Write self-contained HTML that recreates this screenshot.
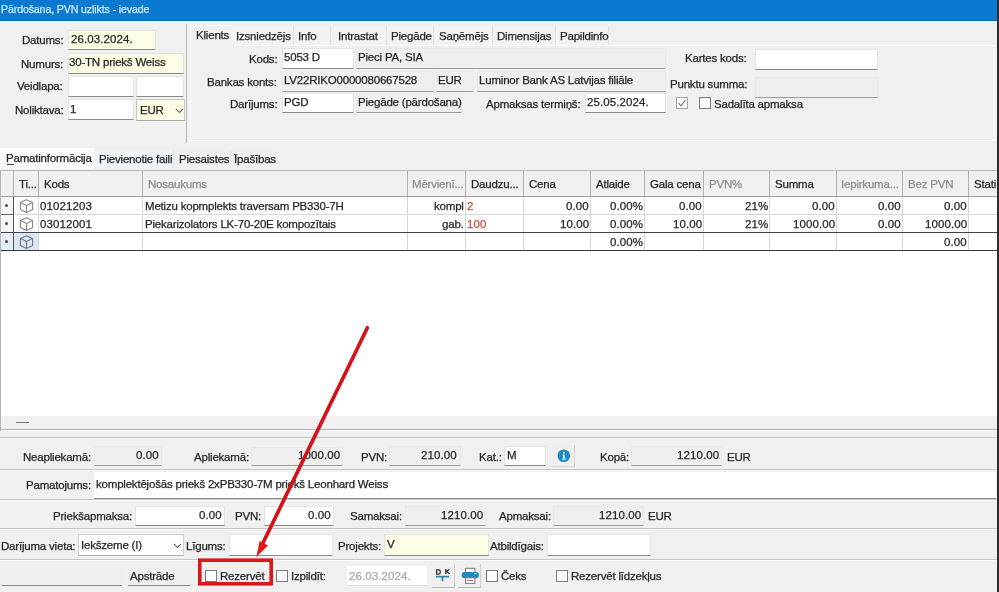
<!DOCTYPE html>
<html><head><meta charset="utf-8"><style>
html,body{margin:0;padding:0;}
body{-webkit-font-smoothing:antialiased;width:999px;height:592px;position:relative;overflow:hidden;background:#f0f0f0;font-family:"Liberation Sans",sans-serif;}
body>div{position:absolute;box-sizing:content-box;}
.t{position:absolute;white-space:pre;line-height:14px;will-change:transform;-webkit-text-stroke:0.25px currentColor;}
</style></head><body>
<div style="left:0px;top:0px;width:999px;height:21px;background:#0b79d0"></div>
<div style="left:0px;top:20px;width:999px;height:1px;background:#0a6ab8"></div>
<span class="t" style="left:0.5px;top:2.02px;color:#c8e9ff;font-size:10.6px;letter-spacing:-0.12px;">Pārdošana, PVN uzlikts - ievade</span>
<div style="left:0px;top:21px;width:999px;height:2px;background:#e2f3fb"></div>
<span class="t" style="right:936px;top:33.00px;color:#262626;font-size:11.5px;letter-spacing:-0.2px;">Datums:</span>
<div style="left:68px;top:30px;width:86px;height:18px;background:#fdfde6;border:1px solid #e4e4e4;border-bottom-color:#8a8a8a"></div>
<span class="t" style="left:71px;top:31.80px;color:#262626;font-size:11.5px;letter-spacing:0.1px;">26.03.2024.</span>
<span class="t" style="right:936px;top:56.50px;color:#262626;font-size:11.5px;letter-spacing:-0.2px;">Numurs:</span>
<div style="left:68px;top:53px;width:114px;height:19px;background:#fdfde6;border:1px solid #e4e4e4;border-bottom-color:#8a8a8a"></div>
<span class="t" style="left:69px;top:55.30px;color:#262626;font-size:11.5px;letter-spacing:-0.2px;">30-TN priekš Weiss</span>
<span class="t" style="right:936px;top:79.00px;color:#262626;font-size:11.5px;letter-spacing:-0.2px;">Veidlapa:</span>
<div style="left:68px;top:76px;width:64px;height:19px;background:#fff;border:1px solid #e4e4e4;border-bottom-color:#8a8a8a"></div>
<div style="left:136px;top:76px;width:46px;height:19px;background:#fff;border:1px solid #e4e4e4;border-bottom-color:#8a8a8a"></div>
<span class="t" style="right:936px;top:102.50px;color:#262626;font-size:11.5px;letter-spacing:-0.2px;">Noliktava:</span>
<div style="left:68px;top:99px;width:64px;height:19px;background:#fff;border:1px solid #e4e4e4;border-bottom-color:#8a8a8a"></div>
<span class="t" style="left:70px;top:101.50px;color:#262626;font-size:11.5px;letter-spacing:0.1px;">1</span>
<div style="left:136px;top:99px;width:47px;height:20px;background:#fdfde6;border:1px solid #c4c4c4;border-bottom-color:#a8a8a8"></div>
<span class="t" style="left:140px;top:102.50px;color:#262626;font-size:11.5px;letter-spacing:-0.2px;">EUR</span>
<svg style="position:absolute;left:174.5px;top:107.5px" width="9" height="6"><path d="M1 1 L4.5 4.5 L8 1" stroke="#6a6a6a" fill="none" stroke-width="1.1"/></svg>
<div style="left:186px;top:24px;width:1px;height:119px;background:#b9b9b9"></div>
<div style="left:190px;top:45px;width:803px;height:94px;background:#f0f0f0;border:1px solid #fbfbfb"></div>
<div style="left:190px;top:25px;width:42px;height:21px;background:#f0f0f0;border-top:1px solid #fbfbfb;border-left:1px solid #fbfbfb;border-right:1px solid #e0e0e0"></div>
<span class="t" style="left:196px;top:27.50px;color:#262626;font-size:11.5px;letter-spacing:-0.2px;">Klients</span>
<div style="left:232px;top:26px;width:61px;height:19px;background:#f2f2f2;border-right:1px solid #e2e2e2"></div>
<span class="t" style="left:236px;top:28.60px;color:#262626;font-size:11.5px;letter-spacing:-0.2px;">Izsniedzējs</span>
<div style="left:294px;top:26px;width:36px;height:19px;background:#f2f2f2;border-right:1px solid #e2e2e2"></div>
<span class="t" style="left:298px;top:28.60px;color:#262626;font-size:11.5px;letter-spacing:-0.2px;">Info</span>
<div style="left:334px;top:26px;width:52px;height:19px;background:#f2f2f2;border-right:1px solid #e2e2e2"></div>
<span class="t" style="left:338px;top:28.60px;color:#262626;font-size:11.5px;letter-spacing:-0.2px;">Intrastat</span>
<div style="left:387px;top:26px;width:46px;height:19px;background:#f2f2f2;border-right:1px solid #e2e2e2"></div>
<span class="t" style="left:391px;top:28.60px;color:#262626;font-size:11.5px;letter-spacing:-0.2px;">Piegāde</span>
<div style="left:435px;top:26px;width:57px;height:19px;background:#f2f2f2;border-right:1px solid #e2e2e2"></div>
<span class="t" style="left:439px;top:28.60px;color:#262626;font-size:11.5px;letter-spacing:-0.2px;">Saņēmējs</span>
<div style="left:493px;top:26px;width:62px;height:19px;background:#f2f2f2;border-right:1px solid #e2e2e2"></div>
<span class="t" style="left:497px;top:28.60px;color:#262626;font-size:11.5px;letter-spacing:-0.2px;">Dimensijas</span>
<div style="left:556px;top:26px;width:52px;height:19px;background:#f2f2f2;border-right:1px solid #e2e2e2"></div>
<span class="t" style="left:560px;top:28.60px;color:#262626;font-size:11.5px;letter-spacing:-0.2px;">Papildinfo</span>
<span class="t" style="right:722px;top:51.50px;color:#262626;font-size:11.5px;letter-spacing:-0.2px;">Kods:</span>
<div style="left:282px;top:48px;width:70px;height:19px;background:#fff;border:1px solid #e4e4e4;border-bottom-color:#8a8a8a"></div>
<span class="t" style="left:284px;top:50.10px;color:#262626;font-size:11.5px;letter-spacing:-0.2px;">5053 D</span>
<div style="left:356px;top:48px;width:308px;height:19px;background:#efefef;border:1px solid #e9e9e9;border-bottom-color:#9a9a9a"></div>
<span class="t" style="left:358.3px;top:50.10px;color:#262626;font-size:11.5px;letter-spacing:-0.2px;">Pieci PA, SIA</span>
<span class="t" style="right:722px;top:74.50px;color:#262626;font-size:11.5px;letter-spacing:-0.2px;">Bankas konts:</span>
<div style="left:282px;top:71px;width:150px;height:19px;background:#efefef;border:1px solid #e9e9e9;border-bottom-color:#9a9a9a"></div>
<span class="t" style="left:284px;top:72.70px;color:#262626;font-size:11.5px;letter-spacing:-0.2px;">LV22RIKO0000080667528</span>
<div style="left:436px;top:71px;width:36px;height:19px;background:#efefef;border:1px solid #e9e9e9;border-bottom-color:#9a9a9a"></div>
<span class="t" style="left:438px;top:72.70px;color:#262626;font-size:11.5px;letter-spacing:-0.2px;">EUR</span>
<div style="left:477px;top:71px;width:187px;height:19px;background:#efefef;border:1px solid #e9e9e9;border-bottom-color:#9a9a9a"></div>
<span class="t" style="left:479px;top:72.70px;color:#262626;font-size:11.5px;letter-spacing:-0.2px;">Luminor Bank AS Latvijas filiāle</span>
<span class="t" style="right:722px;top:96.50px;color:#262626;font-size:11.5px;letter-spacing:-0.2px;">Darījums:</span>
<div style="left:282px;top:93px;width:70px;height:18px;background:#fff;border:1px solid #e4e4e4;border-bottom-color:#8a8a8a"></div>
<span class="t" style="left:284px;top:95.10px;color:#262626;font-size:11.5px;letter-spacing:-0.2px;">PGD</span>
<div style="left:356px;top:93px;width:104px;height:18px;background:#efefef;border:1px solid #e9e9e9;border-bottom-color:#9a9a9a"></div>
<span class="t" style="left:358px;top:95.10px;color:#262626;font-size:11.5px;letter-spacing:-0.2px;">Piegāde (pārdošana)</span>
<span class="t" style="right:419px;top:97.00px;color:#262626;font-size:11.5px;letter-spacing:-0.2px;">Apmaksas termiņš:</span>
<div style="left:585px;top:93px;width:79px;height:18px;background:#fff;border:1px solid #e4e4e4;border-bottom-color:#8a8a8a"></div>
<span class="t" style="left:587px;top:95.30px;color:#262626;font-size:11.5px;letter-spacing:0.1px;">25.05.2024.</span>
<div style="left:676px;top:97px;width:10px;height:10px;border:1px solid #a6a6a6;background:#fcfcfc"></div>
<svg style="position:absolute;left:676px;top:97px" width="12" height="12"><path d="M2.6 6.2 L5 8.8 L9.6 2.8" stroke="#7a7a7a" fill="none" stroke-width="1.1"/></svg>
<div style="left:699px;top:97px;width:10px;height:10px;border:1px solid #7c7c7c;background:#fcfcfc"></div>
<span class="t" style="left:714px;top:97.00px;color:#262626;font-size:11.5px;letter-spacing:-0.2px;">Sadalīta apmaksa</span>
<span class="t" style="right:252px;top:51.30px;color:#262626;font-size:11.5px;letter-spacing:-0.2px;">Kartes kods:</span>
<div style="left:755px;top:49px;width:121px;height:19px;background:#fff;border:1px solid #e4e4e4;border-bottom-color:#8a8a8a"></div>
<span class="t" style="right:252px;top:76.50px;color:#262626;font-size:11.5px;letter-spacing:-0.2px;">Punktu summa:</span>
<div style="left:755px;top:77px;width:121px;height:19px;background:#efefef;border:1px solid #e9e9e9;border-bottom-color:#9a9a9a"></div>
<div style="left:0px;top:148px;width:94px;height:21px;background:#fafafa"></div>
<div style="left:94px;top:150px;width:79px;height:18px;background:#f1f4f7"></div>
<div style="left:173px;top:150px;width:57px;height:18px;background:#efefef;border-left:1px solid #e4e4e4"></div>
<div style="left:230px;top:150px;width:48px;height:18px;background:#efefef;border-left:1px solid #e4e4e4"></div>
<span class="t" style="left:6px;top:150.80px;color:#262626;font-size:11.5px;letter-spacing:-0.2px;">Pamatinformācija</span>
<div style="left:7px;top:164px;width:7px;height:1px;background:#444"></div>
<span class="t" style="left:99px;top:151.80px;color:#262626;font-size:11.5px;letter-spacing:-0.2px;">Pievienotie faili</span>
<span class="t" style="left:179px;top:151.80px;color:#262626;font-size:11.5px;letter-spacing:-0.2px;">Piesaistes</span>
<span class="t" style="left:234px;top:151.80px;color:#262626;font-size:11.5px;letter-spacing:-0.2px;">Īpašības</span>
<div style="left:0px;top:170px;width:997px;height:260px;background:#fff;border-left:1px solid #b4b4b4;border-top:1px solid #b8b8b8"></div>
<div style="left:1px;top:171px;width:996px;height:25px;background:#f0f0f0"></div>
<div style="left:1px;top:196px;width:996px;height:1px;background:#9c9c9c"></div>
<div style="left:13px;top:171px;width:1px;height:25px;background:#b0b0b0"></div>
<div style="left:38px;top:171px;width:1px;height:25px;background:#b0b0b0"></div>
<div style="left:142px;top:171px;width:1px;height:25px;background:#b0b0b0"></div>
<div style="left:407px;top:171px;width:1px;height:25px;background:#b0b0b0"></div>
<div style="left:465px;top:171px;width:1px;height:25px;background:#b0b0b0"></div>
<div style="left:523px;top:171px;width:1px;height:25px;background:#b0b0b0"></div>
<div style="left:590px;top:171px;width:1px;height:25px;background:#b0b0b0"></div>
<div style="left:644px;top:171px;width:1px;height:25px;background:#b0b0b0"></div>
<div style="left:703px;top:171px;width:1px;height:25px;background:#b0b0b0"></div>
<div style="left:769px;top:171px;width:1px;height:25px;background:#b0b0b0"></div>
<div style="left:836px;top:171px;width:1px;height:25px;background:#b0b0b0"></div>
<div style="left:902px;top:171px;width:1px;height:25px;background:#b0b0b0"></div>
<div style="left:968px;top:171px;width:1px;height:25px;background:#b0b0b0"></div>
<div style="left:38px;top:197px;width:1px;height:53px;background:#d6d6d6"></div>
<div style="left:142px;top:197px;width:1px;height:53px;background:#d6d6d6"></div>
<div style="left:407px;top:197px;width:1px;height:53px;background:#d6d6d6"></div>
<div style="left:465px;top:197px;width:1px;height:53px;background:#d6d6d6"></div>
<div style="left:523px;top:197px;width:1px;height:53px;background:#d6d6d6"></div>
<div style="left:590px;top:197px;width:1px;height:53px;background:#d6d6d6"></div>
<div style="left:644px;top:197px;width:1px;height:53px;background:#d6d6d6"></div>
<div style="left:703px;top:197px;width:1px;height:53px;background:#d6d6d6"></div>
<div style="left:769px;top:197px;width:1px;height:53px;background:#d6d6d6"></div>
<div style="left:836px;top:197px;width:1px;height:53px;background:#d6d6d6"></div>
<div style="left:902px;top:197px;width:1px;height:53px;background:#d6d6d6"></div>
<div style="left:968px;top:197px;width:1px;height:53px;background:#d6d6d6"></div>
<div style="left:1px;top:197px;width:12px;height:35px;background:#f6f6f6"></div>
<div style="left:1px;top:233px;width:12px;height:17px;background:#e4edf6"></div>
<div style="left:14px;top:233px;width:24px;height:17px;background:#dbe8f4"></div>
<div style="left:13px;top:197px;width:1px;height:53px;background:#505050"></div>
<div style="left:1px;top:214px;width:12px;height:1px;background:#606060"></div>
<div style="left:14px;top:214px;width:983px;height:1px;background:#d8d8d8"></div>
<div style="left:1px;top:232px;width:996px;height:1px;background:#444"></div>
<div style="left:1px;top:250px;width:996px;height:1px;background:#3a3a3a"></div>
<div style="left:997px;top:0px;width:2px;height:592px;background:#2e2e2e"></div>
<span class="t" style="left:19px;top:177.00px;color:#262626;font-size:11.5px;letter-spacing:-0.2px;">Ti...</span>
<span class="t" style="left:44px;top:177.00px;color:#262626;font-size:11.5px;letter-spacing:-0.2px;">Kods</span>
<span class="t" style="left:148px;top:177.00px;color:#8e8e8e;font-size:11.5px;letter-spacing:-0.2px;">Nosaukums</span>
<span class="t" style="left:412px;top:177.00px;color:#8e8e8e;font-size:11.5px;letter-spacing:-0.2px;">Mērvienī...</span>
<span class="t" style="left:471px;top:177.00px;color:#262626;font-size:11.5px;letter-spacing:-0.2px;">Daudzu...</span>
<span class="t" style="left:529px;top:177.00px;color:#262626;font-size:11.5px;letter-spacing:-0.2px;">Cena</span>
<span class="t" style="left:596px;top:177.00px;color:#262626;font-size:11.5px;letter-spacing:-0.2px;">Atlaide</span>
<span class="t" style="left:650px;top:177.00px;color:#262626;font-size:11.5px;letter-spacing:-0.2px;">Gala cena</span>
<span class="t" style="left:709px;top:177.00px;color:#8e8e8e;font-size:11.5px;letter-spacing:-0.2px;">PVN%</span>
<span class="t" style="left:775px;top:177.00px;color:#262626;font-size:11.5px;letter-spacing:-0.2px;">Summa</span>
<span class="t" style="left:841px;top:177.00px;color:#8e8e8e;font-size:11.5px;letter-spacing:-0.2px;">Iepirkuma...</span>
<span class="t" style="left:908px;top:177.00px;color:#8e8e8e;font-size:11.5px;letter-spacing:-0.2px;">Bez PVN</span>
<span class="t" style="left:974px;top:177.00px;color:#262626;font-size:11.5px;letter-spacing:-0.2px;">Stati</span>
<div style="left:4.75px;top:203.75px;width:3.5px;height:3.5px;border-radius:2px;background:#4a4a4a"></div>
<svg style="position:absolute;left:18.5px;top:199px" width="15" height="15" viewBox="0 0 15 15"><path d="M7.5 0.8 L13.6 3.6 L13.6 10.6 L7.5 13.6 L1.4 10.6 L1.4 3.6 Z M1.4 3.6 L7.5 6.5 L13.6 3.6 M7.5 6.5 L7.5 13.6" stroke="#8a8a8a" fill="none" stroke-width="1.15" stroke-linejoin="round"/></svg>
<span class="t" style="left:40px;top:198.50px;color:#262626;font-size:11.5px;letter-spacing:0.1px;">01021203</span>
<span class="t" style="left:145px;top:198.50px;color:#262626;font-size:11.5px;letter-spacing:-0.2px;">Metizu kopmplekts traversam PB330-7H</span>
<span class="t" style="right:535px;top:198.50px;color:#262626;font-size:11.5px;letter-spacing:-0.2px;">kompl</span>
<span class="t" style="left:467px;top:198.50px;color:#cf4a4a;font-size:11.5px;letter-spacing:0.1px;">2</span>
<span class="t" style="right:410px;top:198.50px;color:#262626;font-size:11.5px;letter-spacing:0.1px;">0.00</span>
<span class="t" style="right:356px;top:198.50px;color:#262626;font-size:11.5px;letter-spacing:0.1px;">0.00%</span>
<span class="t" style="right:297px;top:198.50px;color:#262626;font-size:11.5px;letter-spacing:0.1px;">0.00</span>
<span class="t" style="right:231px;top:198.50px;color:#262626;font-size:11.5px;letter-spacing:0.1px;">21%</span>
<span class="t" style="right:164px;top:198.50px;color:#262626;font-size:11.5px;letter-spacing:0.1px;">0.00</span>
<span class="t" style="right:98px;top:198.50px;color:#262626;font-size:11.5px;letter-spacing:0.1px;">0.00</span>
<span class="t" style="right:32px;top:198.50px;color:#262626;font-size:11.5px;letter-spacing:0.1px;">0.00</span>
<div style="left:4.75px;top:221.75px;width:3.5px;height:3.5px;border-radius:2px;background:#4a4a4a"></div>
<svg style="position:absolute;left:18.5px;top:217px" width="15" height="15" viewBox="0 0 15 15"><path d="M7.5 0.8 L13.6 3.6 L13.6 10.6 L7.5 13.6 L1.4 10.6 L1.4 3.6 Z M1.4 3.6 L7.5 6.5 L13.6 3.6 M7.5 6.5 L7.5 13.6" stroke="#8a8a8a" fill="none" stroke-width="1.15" stroke-linejoin="round"/></svg>
<span class="t" style="left:40px;top:216.50px;color:#262626;font-size:11.5px;letter-spacing:0.1px;">03012001</span>
<span class="t" style="left:145px;top:216.50px;color:#262626;font-size:11.5px;letter-spacing:-0.2px;">Piekarizolators LK-70-20E kompozītais</span>
<span class="t" style="right:535px;top:216.50px;color:#262626;font-size:11.5px;letter-spacing:-0.2px;">gab.</span>
<span class="t" style="left:467px;top:216.50px;color:#cf4a4a;font-size:11.5px;letter-spacing:0.1px;">100</span>
<span class="t" style="right:410px;top:216.50px;color:#262626;font-size:11.5px;letter-spacing:0.1px;">10.00</span>
<span class="t" style="right:356px;top:216.50px;color:#262626;font-size:11.5px;letter-spacing:0.1px;">0.00%</span>
<span class="t" style="right:297px;top:216.50px;color:#262626;font-size:11.5px;letter-spacing:0.1px;">10.00</span>
<span class="t" style="right:231px;top:216.50px;color:#262626;font-size:11.5px;letter-spacing:0.1px;">21%</span>
<span class="t" style="right:164px;top:216.50px;color:#262626;font-size:11.5px;letter-spacing:0.1px;">1000.00</span>
<span class="t" style="right:98px;top:216.50px;color:#262626;font-size:11.5px;letter-spacing:0.1px;">0.00</span>
<span class="t" style="right:32px;top:216.50px;color:#262626;font-size:11.5px;letter-spacing:0.1px;">1000.00</span>
<div style="left:4.75px;top:239.75px;width:3.5px;height:3.5px;border-radius:2px;background:#3a4550"></div>
<svg style="position:absolute;left:18.5px;top:235px" width="15" height="15" viewBox="0 0 15 15"><path d="M7.5 0.8 L13.6 3.6 L13.6 10.6 L7.5 13.6 L1.4 10.6 L1.4 3.6 Z M1.4 3.6 L7.5 6.5 L13.6 3.6 M7.5 6.5 L7.5 13.6" stroke="#6f7c88" fill="none" stroke-width="1.15" stroke-linejoin="round"/></svg>
<span class="t" style="right:356px;top:234.50px;color:#262626;font-size:11.5px;letter-spacing:0.1px;">0.00%</span>
<span class="t" style="right:32px;top:234.50px;color:#262626;font-size:11.5px;letter-spacing:0.1px;">0.00</span>
<div style="left:1px;top:416px;width:996px;height:13px;background:#f0f0f0"></div>
<div style="left:16px;top:421.5px;width:13px;height:1.5px;background:#7a7a7a"></div>
<div style="left:0px;top:429px;width:997px;height:1px;background:#b0b0b0"></div>
<div style="left:0px;top:437px;width:997px;height:1px;background:#c4c4c4"></div>
<div style="left:0px;top:438px;width:997px;height:1px;background:#fafafa"></div>
<span class="t" style="right:908px;top:449.50px;color:#262626;font-size:11.5px;letter-spacing:-0.2px;">Neapliekamā:</span>
<div style="left:94px;top:446px;width:66px;height:18px;background:#efefef;border:1px solid #e9e9e9;border-bottom-color:#9a9a9a"></div>
<span class="t" style="right:840px;top:447.50px;color:#262626;font-size:11.5px;letter-spacing:0.1px;">0.00</span>
<span class="t" style="right:750px;top:449.50px;color:#262626;font-size:11.5px;letter-spacing:-0.2px;">Apliekamā:</span>
<div style="left:251px;top:447px;width:90px;height:17px;background:#efefef;border:1px solid #e9e9e9;border-bottom-color:#9a9a9a"></div>
<span class="t" style="right:659px;top:447.50px;color:#262626;font-size:11.5px;letter-spacing:0.1px;">1000.00</span>
<span class="t" style="right:612px;top:449.50px;color:#262626;font-size:11.5px;letter-spacing:-0.2px;">PVN:</span>
<div style="left:389px;top:446px;width:70px;height:18px;background:#efefef;border:1px solid #e9e9e9;border-bottom-color:#9a9a9a"></div>
<span class="t" style="right:542px;top:447.50px;color:#262626;font-size:11.5px;letter-spacing:0.1px;">210.00</span>
<span class="t" style="right:497px;top:449.50px;color:#262626;font-size:11.5px;letter-spacing:-0.2px;">Kat.:</span>
<div style="left:504px;top:446px;width:40px;height:18px;background:#fff;border:1px solid #e4e4e4;border-bottom-color:#8a8a8a"></div>
<span class="t" style="left:507px;top:447.50px;color:#262626;font-size:11.5px;letter-spacing:-0.2px;">M</span>
<div style="left:552px;top:445px;width:22px;height:21px;background:#efefef;border-right:1px solid #d4d4d4;border-bottom:1px solid #d4d4d4"></div>
<svg style="position:absolute;left:557px;top:448.5px" width="14" height="14" viewBox="0 0 14 14"><circle cx="6.8" cy="6.8" r="6.3" fill="#2089c2"/><path d="M5.7 5.6 h2 v4 h0.9 v1.1 h-3.3 v-1.1 h0.8 v-2.9 h-0.4 z" fill="#dff3ff"/><circle cx="6.9" cy="3.7" r="1.05" fill="#dff3ff"/></svg>
<span class="t" style="right:370px;top:449.50px;color:#262626;font-size:11.5px;letter-spacing:-0.2px;">Kopā:</span>
<div style="left:631px;top:446px;width:89px;height:18px;background:#efefef;border:1px solid #e9e9e9;border-bottom-color:#9a9a9a"></div>
<span class="t" style="right:280px;top:447.50px;color:#262626;font-size:11.5px;letter-spacing:0.1px;">1210.00</span>
<span class="t" style="left:727px;top:449.50px;color:#262626;font-size:11.5px;letter-spacing:-0.2px;">EUR</span>
<div style="left:0px;top:469px;width:997px;height:1px;background:#c4c4c4"></div>
<div style="left:0px;top:470px;width:997px;height:1px;background:#fafafa"></div>
<span class="t" style="right:908px;top:477.50px;color:#262626;font-size:11.5px;letter-spacing:-0.2px;">Pamatojums:</span>
<div style="left:94px;top:472px;width:902px;height:26px;background:#fff;border-bottom:1px solid #8c8c8c"></div>
<span class="t" style="left:96px;top:476.50px;color:#262626;font-size:11.5px;letter-spacing:-0.2px;">komplektējošās priekš 2xPB330-7M priekš Leonhard Weiss</span>
<div style="left:0px;top:499px;width:997px;height:1px;background:#c8c8c8"></div>
<div style="left:0px;top:500px;width:997px;height:1px;background:#fafafa"></div>
<span class="t" style="right:867px;top:509.00px;color:#262626;font-size:11.5px;letter-spacing:-0.2px;">Priekšapmaksa:</span>
<div style="left:135px;top:506px;width:88px;height:18px;background:#fff;border:1px solid #e4e4e4;border-bottom-color:#8a8a8a"></div>
<span class="t" style="right:777px;top:507.50px;color:#262626;font-size:11.5px;letter-spacing:0.1px;">0.00</span>
<span class="t" style="right:738px;top:509.00px;color:#262626;font-size:11.5px;letter-spacing:-0.2px;">PVN:</span>
<div style="left:264px;top:506px;width:68px;height:18px;background:#fff;border:1px solid #e4e4e4;border-bottom-color:#8a8a8a"></div>
<span class="t" style="right:668px;top:507.50px;color:#262626;font-size:11.5px;letter-spacing:0.1px;">0.00</span>
<span class="t" style="right:597px;top:509.00px;color:#262626;font-size:11.5px;letter-spacing:-0.2px;">Samaksai:</span>
<div style="left:405px;top:506px;width:79px;height:18px;background:#efefef;border:1px solid #e9e9e9;border-bottom-color:#9a9a9a"></div>
<span class="t" style="right:516px;top:507.50px;color:#262626;font-size:11.5px;letter-spacing:0.1px;">1210.00</span>
<span class="t" style="right:448px;top:509.00px;color:#262626;font-size:11.5px;letter-spacing:-0.2px;">Apmaksai:</span>
<div style="left:553px;top:506px;width:89px;height:18px;background:#efefef;border:1px solid #e9e9e9;border-bottom-color:#9a9a9a"></div>
<span class="t" style="right:358px;top:507.50px;color:#262626;font-size:11.5px;letter-spacing:0.1px;">1210.00</span>
<span class="t" style="left:648px;top:509.00px;color:#262626;font-size:11.5px;letter-spacing:-0.2px;">EUR</span>
<div style="left:0px;top:528px;width:997px;height:1px;background:#c4c4c4"></div>
<div style="left:0px;top:529px;width:997px;height:1px;background:#fafafa"></div>
<span class="t" style="right:924px;top:538.50px;color:#262626;font-size:11.5px;letter-spacing:-0.2px;">Darījuma vieta:</span>
<div style="left:78px;top:534px;width:104px;height:20px;background:#fff;border:1px solid #cfcfcf;border-bottom-color:#b0b0b0"></div>
<span class="t" style="left:81px;top:537.50px;color:#262626;font-size:11.5px;letter-spacing:-0.2px;">Iekšzeme (I)</span>
<svg style="position:absolute;left:172.5px;top:543px" width="9" height="6"><path d="M1 1 L4.5 4.5 L8 1" stroke="#6a6a6a" fill="none" stroke-width="1.1"/></svg>
<span class="t" style="right:773px;top:538.50px;color:#262626;font-size:11.5px;letter-spacing:-0.2px;">Līgums:</span>
<div style="left:229px;top:534px;width:102px;height:20px;background:#fff;border:1px solid #e4e4e4;border-bottom-color:#8a8a8a"></div>
<span class="t" style="right:618px;top:538.50px;color:#262626;font-size:11.5px;letter-spacing:-0.2px;">Projekts:</span>
<div style="left:384px;top:534px;width:103px;height:20px;background:#fdfde6;border:1px solid #e4e4e4;border-bottom-color:#8a8a8a"></div>
<span class="t" style="left:387px;top:536.50px;color:#262626;font-size:11.5px;letter-spacing:-0.2px;">V</span>
<span class="t" style="right:455px;top:538.50px;color:#262626;font-size:11.5px;letter-spacing:-0.2px;">Atbildīgais:</span>
<div style="left:547px;top:534px;width:102px;height:20px;background:#fff;border:1px solid #e4e4e4;border-bottom-color:#8a8a8a"></div>
<div style="left:0px;top:559px;width:997px;height:1px;background:#c4c4c4"></div>
<div style="left:0px;top:560px;width:997px;height:1px;background:#fafafa"></div>
<div style="left:2px;top:566px;width:120px;height:19px;background:#efefef;border-bottom:1px solid #8c8c8c"></div>
<div style="left:128px;top:566px;width:62px;height:19px;background:#efefef;border-bottom:1px solid #8c8c8c"></div>
<span class="t" style="left:130px;top:568.50px;color:#262626;font-size:11.5px;letter-spacing:-0.2px;">Apstrāde</span>
<div style="left:205px;top:570px;width:10px;height:10px;border:1px solid #7c7c7c;background:#fcfcfc"></div>
<span class="t" style="left:220px;top:569.00px;color:#262626;font-size:11.5px;letter-spacing:-0.2px;">Rezervēt</span>
<div style="left:276px;top:570px;width:10px;height:10px;border:1px solid #7c7c7c;background:#fcfcfc"></div>
<span class="t" style="left:291px;top:569.00px;color:#262626;font-size:11.5px;letter-spacing:-0.2px;">Izpildīt:</span>
<div style="left:347px;top:566px;width:80px;height:19px;background:#fff;border:0;border-bottom:1px solid #e0e0e0"></div>
<span class="t" style="left:349px;top:568.50px;color:#a8a8a8;font-size:11.5px;letter-spacing:0.1px;">26.03.2024.</span>
<div style="left:432px;top:564px;width:22px;height:23px;background:#f0f0f0;border-right:1px solid #d0d0d0;border-bottom:1px solid #b8b8b8"></div>
<svg style="position:absolute;left:430px;top:562px" width="24" height="24" viewBox="0 0 24 24"><path d="M6.6 7.9 h2.2 a1.4 1.4 0 0 1 1.4 1.4 v1.4 a1.4 1.4 0 0 1 -1.4 1.4 h-2.2 z" fill="none" stroke="#333" stroke-width="1.3"/><path d="M15.7 7.3 v4.6 M15.7 9.8 L19.4 7.3 M16.6 9.3 L19.6 11.9" fill="none" stroke="#333" stroke-width="1.3"/><rect x="6" y="13.8" width="13" height="1.7" fill="#2d86b2"/><rect x="11.6" y="14" width="1.8" height="5.2" fill="#2d86b2"/></svg>
<div style="left:458px;top:564px;width:22px;height:23px;background:#f0f0f0;border-right:1px solid #d0d0d0;border-bottom:1px solid #b8b8b8"></div>
<svg style="position:absolute;left:460px;top:566px" width="21" height="19" viewBox="0 0 21 19"><rect x="5.5" y="2.3" width="9.4" height="5" fill="#fafafa" stroke="#7a7a7a" stroke-width="1"/><rect x="1.6" y="6" width="17.3" height="6.2" rx="3" fill="#2389b8"/><rect x="14" y="7" width="3" height="1.2" fill="#7cc6e6"/><rect x="5.5" y="11.8" width="9.4" height="5.6" fill="#fafafa" stroke="#7a7a7a" stroke-width="1"/><rect x="6.8" y="14" width="6.5" height="1" fill="#b86868"/></svg>
<div style="left:486px;top:570px;width:10px;height:10px;border:1px solid #7c7c7c;background:#fcfcfc"></div>
<span class="t" style="left:501px;top:569.00px;color:#262626;font-size:11.5px;letter-spacing:-0.2px;">Čeks</span>
<div style="left:556px;top:570px;width:10px;height:10px;border:1px solid #7c7c7c;background:#fcfcfc"></div>
<span class="t" style="left:571px;top:569.00px;color:#262626;font-size:11.5px;letter-spacing:-0.2px;">Rezervēt līdzekļus</span>
<svg style="position:absolute;left:0;top:0" width="999" height="592"><line x1="367.4" y1="327.8" x2="262" y2="545" stroke="#d3121a" stroke-width="3.7" stroke-linecap="round"/><path d="M256.3 557 L259.6 541 L268 545.5 Z" fill="#e01a1a"/><rect x="199.8" y="560.2" width="71.4" height="23.6" fill="none" stroke="#d8181d" stroke-width="3.6"/></svg>
</body></html>
